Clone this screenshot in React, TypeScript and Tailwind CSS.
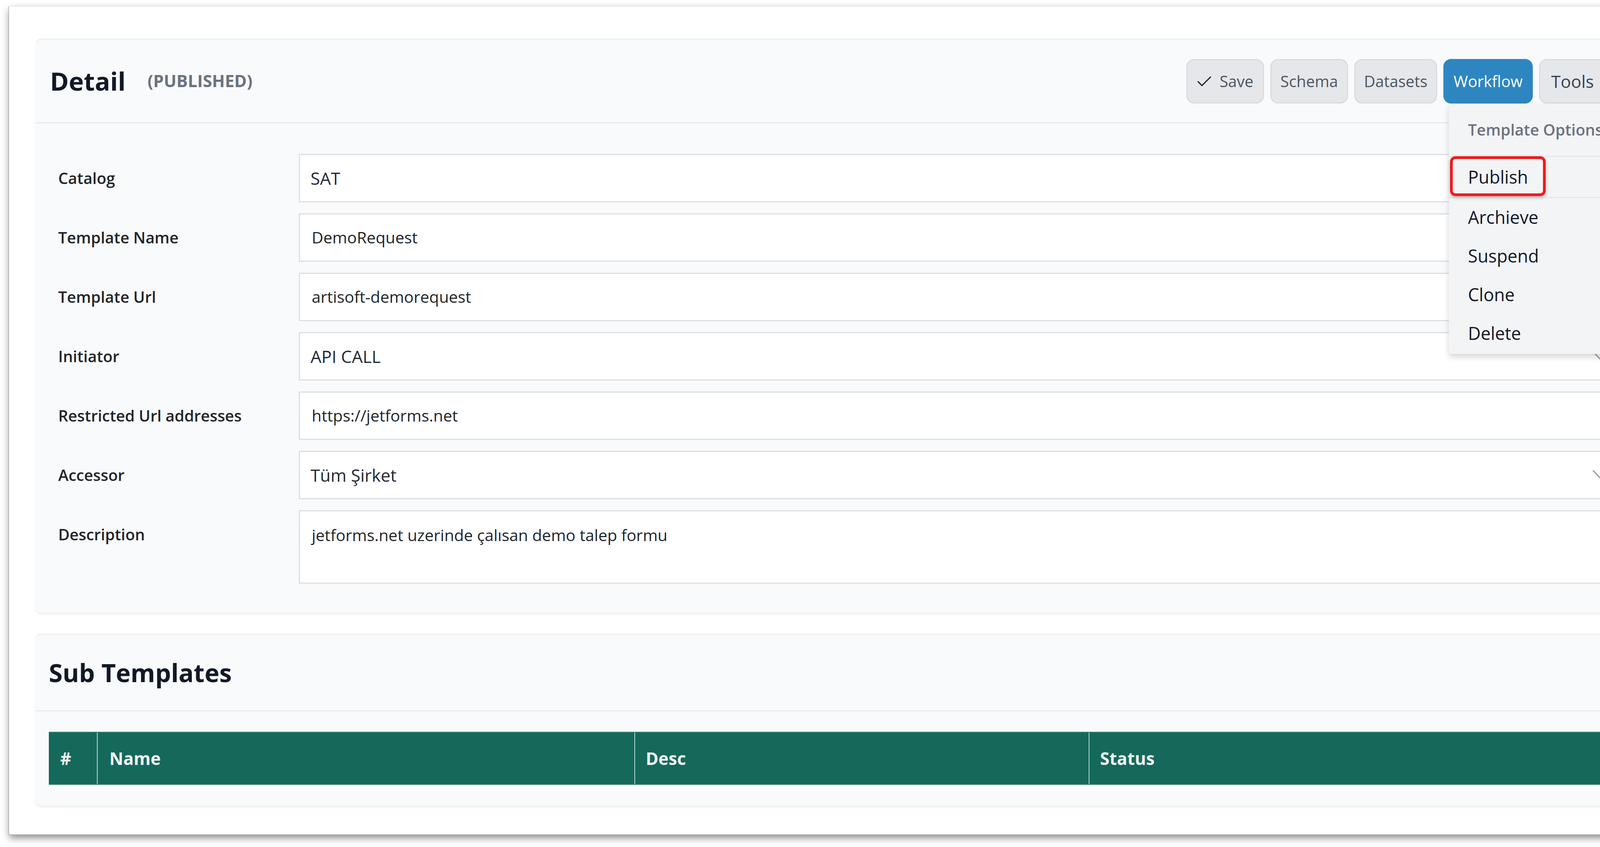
import React from 'react'

const rows = [
  { label: 'Catalog', value: 'SAT', kind: 'select-plain' },
  { label: 'Template Name', value: 'DemoRequest', kind: 'input' },
  { label: 'Template Url', value: 'artisoft-demorequest', kind: 'input' },
  { label: 'Initiator', value: 'API CALL', kind: 'select' },
  { label: 'Restricted Url addresses', value: 'https://jetforms.net', kind: 'input' },
  { label: 'Accessor', value: 'Tüm Şirket', kind: 'select' },
]

function Chevron() {
  return (
    <svg viewBox="0 0 48 28" className="w-[48px] h-[28px] shrink-0" fill="none" stroke="#9ca3af" strokeWidth={3.5} strokeLinecap="round" strokeLinejoin="round">
      <path d="M3 3 L24 25 L45 3" />
    </svg>
  )
}

function Field({ label, value, kind }: { label: string; value: string; kind: string }) {
  return (
    <div className="flex items-center">
      <div className="w-[616px] shrink-0 text-[40px] font-semibold text-[#212529]">{label}</div>
      <div className="flex-1 min-w-0 h-[124px] bg-white border-[3px] border-[#dcdfe4] flex items-center justify-between">
        {kind === 'input' ? (
          <span className="pl-[30px] text-[41px] text-[#212529]">{value}</span>
        ) : (
          <span className="pl-[27px] text-[44px] text-[#1f2937]">{value}</span>
        )}
        {kind === 'select' && (
          <div className="pr-[48px]">
            <Chevron />
          </div>
        )}
      </div>
    </div>
  )
}

export default function App() {
  return (
    <div className="w-[4336px] h-[2168px] overflow-hidden bg-white pl-[22px] pt-[16px] font-['Open_Sans',sans-serif]">
      <div className="w-[4291px] h-[2121px] bg-white border border-[#9a9a9a] border-t-[#e6e6e6] shadow-[2px_8px_18px_rgba(0,0,0,0.45)] px-[69px] pt-[82px]">
        {/* Detail card */}
        <div className="bg-[#f9fafb] rounded-[14px] border-t-[3px] border-[#eceef1] shadow-[0_4px_6px_rgba(0,0,0,0.08)]">
          <div className="h-[214px] flex items-center justify-between pl-[36px] pr-[44px] border-b-[3px] border-[#e8eaed]">
            <div className="flex items-center gap-[56px]">
              <h1 className="text-[65px] font-bold text-[#111827] leading-none">Detail</h1>
              <span className="text-[43px] font-bold text-[#6b7280]">(PUBLISHED)</span>
            </div>
            <div className="relative flex items-center gap-[16px]">
              <button className="w-[199px] h-[114px] rounded-[20px] border-[3px] border-[#d9dbe0] bg-[#e6e7eb] flex items-center justify-center gap-[20px] text-[40px] text-[#4b5563]">
                <svg viewBox="0 0 38 28" className="w-[38px] h-[28px]" fill="none" stroke="#111827" strokeWidth={3} strokeLinecap="round" strokeLinejoin="round">
                  <path d="M3 15 L13 25 L35 3" />
                </svg>
                <span>Save</span>
              </button>
              <button className="w-[199px] h-[114px] rounded-[20px] border-[3px] border-[#d9dbe0] bg-[#e6e7eb] flex items-center justify-center text-[40px] text-[#4b5563]">
                Schema
              </button>
              <button className="w-[212px] h-[114px] rounded-[20px] border-[3px] border-[#d9dbe0] bg-[#e6e7eb] flex items-center justify-center text-[40px] text-[#4b5563]">
                Datasets
              </button>
              <button className="w-[229px] h-[114px] rounded-[20px] border-[3px] border-[#2e86c1] bg-[#2e86c1] flex items-center justify-center text-[40px] text-white">
                Workflow
              </button>
              <button className="w-[259px] h-[114px] rounded-[20px] border-[3px] border-[#d9dbe0] bg-[#e6e7eb] flex items-center pl-[28px] gap-[24px] text-[44px] text-[#374151]">
                <span>Tools</span>
                <svg viewBox="0 0 52 30" className="w-[52px] h-[30px]" fill="none" stroke="#374151" strokeWidth={5.5} strokeLinecap="round" strokeLinejoin="round">
                  <path d="M4 4 L26 26 L48 4" />
                </svg>
              </button>

              {/* Tools dropdown */}
              <div className="absolute right-[-2px] top-full mt-[1px] w-[492px] bg-[#f3f4f6] rounded-[6px] shadow-[0_8px_16px_rgba(0,0,0,0.16)] z-10 pb-[3px]">
                <div className="h-[136px] flex items-center px-[49px] text-[40px] font-semibold text-[#6b7280] border-b-[3px] border-[#e5e7eb]">
                  Template Options
                </div>
                <div className="relative h-[105px] flex items-center px-[49px] text-[45px] text-[#111827] border-b-[3px] border-[#e5e7eb]">
                  Publish
                  <div className="absolute left-[3px] top-[-2px] w-[245px] h-[102px] border-[7px] border-[#ee1b1b] rounded-[14px] shadow-[0_4px_8px_rgba(0,0,0,0.25)]" />
                </div>
                {['Archieve', 'Suspend', 'Clone', 'Delete'].map((item) => (
                  <div key={item} className="h-[99px] flex items-center px-[49px] text-[45px] text-[#111827]">
                    {item}
                  </div>
                ))}
              </div>
            </div>
          </div>

          <div className="pt-[78px] pb-[74px] pl-[57px] pr-[68px] flex flex-col gap-[28px]">
            {rows.map((r) => (
              <Field key={r.label} label={r.label} value={r.value} kind={r.kind} />
            ))}
            <div className="flex items-start">
              <div className="w-[616px] shrink-0 h-[124px] flex items-center text-[40px] font-semibold text-[#212529]">
                Description
              </div>
              <textarea
                className="flex-1 min-w-0 h-[188px] bg-white border-[3px] border-[#dcdfe4] pt-[30px] pl-[30px] text-[41px] text-[#212529] outline-none"
                defaultValue="jetforms.net uzerinde çalısan demo talep formu"
              />
            </div>
          </div>
        </div>

        {/* Sub Templates card */}
        <div className="mt-[54px] bg-[#f9fafb] rounded-[14px] border-t-[3px] border-[#eceef1] shadow-[0_4px_6px_rgba(0,0,0,0.08)]">
          <div className="h-[196px] flex items-center justify-between pl-[33px] pr-[41px] border-b-[3px] border-[#e8eaed]">
            <h2 className="text-[64px] font-bold text-[#111827]">Sub Templates</h2>
            <button className="w-[74px] h-[74px] border-[3px] border-[#7db4f7] flex items-center justify-center mb-[20px]">
              <svg viewBox="0 0 44 44" className="w-[44px] h-[44px]" fill="none" stroke="#5ea1f3" strokeWidth={4} strokeLinecap="round">
                <path d="M22 3 V41 M3 22 H41" />
              </svg>
            </button>
          </div>
          <div className="pt-[52px] pb-[53px] pl-[33px] pr-[43px]">
            <div className="h-[136px] grid grid-cols-[123px_1376px_1163px_1fr] bg-[#14695a] text-[44px] font-bold text-[#f1f3f4] border-y-2 border-[#3f8676]">
              <div className="flex items-center pl-[29px]">#</div>
              <div className="flex items-center pl-[30px] border-l-2 border-[#b9d4cd]">Name</div>
              <div className="flex items-center pl-[27px] border-l-2 border-[#b9d4cd]">Desc</div>
              <div className="flex items-center pl-[27px] border-l-2 border-[#b9d4cd]">Status</div>
            </div>
          </div>
        </div>
      </div>
    </div>
  )
}
